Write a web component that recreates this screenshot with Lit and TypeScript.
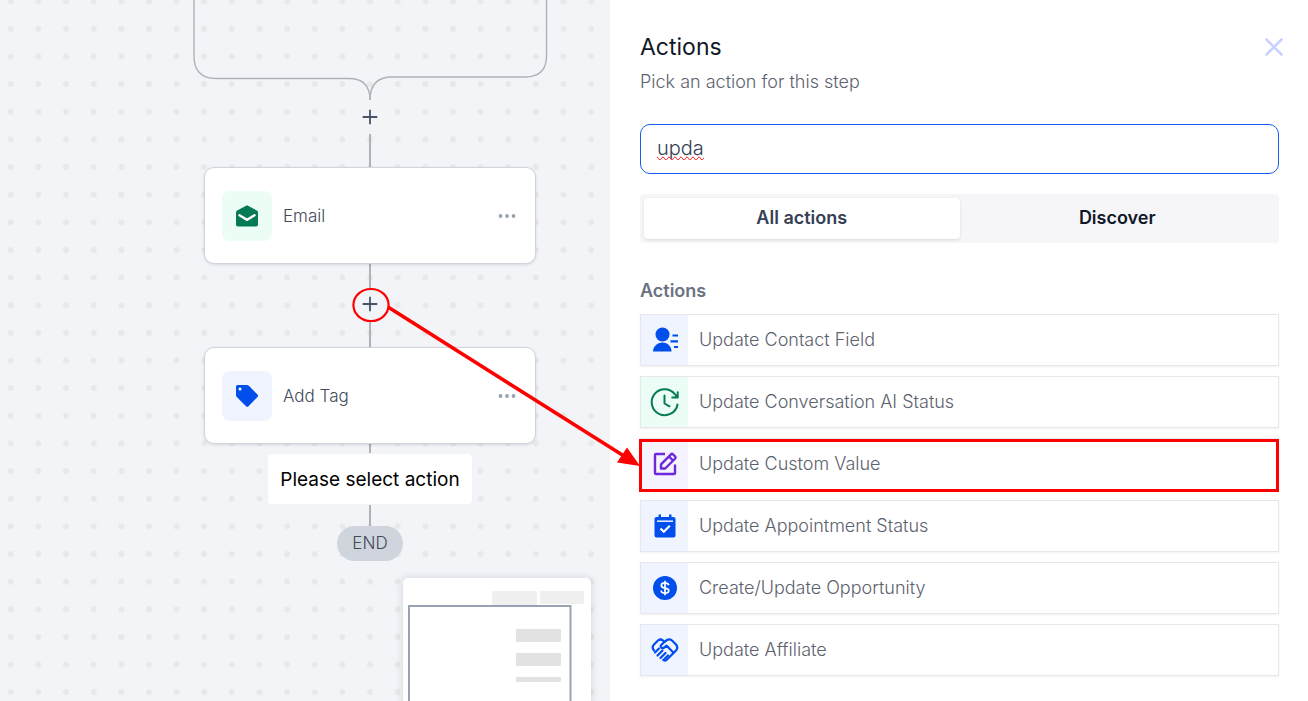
import { LitElement, html, css, svg } from "lit";
import { customElement, state } from "lit/decorators.js";
import { classMap } from "lit/directives/class-map.js";

const icons = {
  contact: svg`<svg viewBox="1 0 28 28" class="blue"><g fill="currentColor"><circle cx="12.500" cy="8.500" r="7"/><path d="M3 25.500c0-5 4.300-9 9.500-9s9 4 9 9z"/></g><path d="M22.500 9.500h5.500M20.500 15.300h7.500M24 21h4" stroke="currentColor" stroke-width="2.200" fill="none"/></svg>`,
  clock: svg`<svg viewBox="0 0 28 28" class="green"><g fill="none" stroke="currentColor" stroke-width="2" stroke-linecap="round" stroke-linejoin="round"><path d="M26.500 16.500A13 13 0 1 1 24 6.300l2.500 3M26.700 4.200v5.300h-5.500"/><path d="M13.500 7.500v8l5 2.800"/></g></svg>`,
  edit: svg`<svg viewBox="0 0 28 28" class="purple"><g fill="none" stroke="currentColor" stroke-width="2.400" stroke-linejoin="round"><path d="M14 4H5Q4 4 4 5V23Q4 24 5 24H23Q24 24 24 23V14.500"/><path d="M10 18.500v-4.200L20 4.300q1-.9 2 0l2.200 2.200q.9 1 0 2L14.200 18.500z"/><path d="M18 6.500l4 4"/></g></svg>`,
  calendar: svg`<svg viewBox="0 0 28 28" class="blue"><path fill="currentColor" d="M7.500 2.500h2.500v2.500h8v-2.500h2.500v2.500h2a2 2 0 0 1 2 2v16.500a2 2 0 0 1-2 2h-17a2 2 0 0 1-2-2V7a2 2 0 0 1 2-2h2z"/><path d="M6 9.200h16" stroke="#e0eaff" stroke-width="1.600"/><path d="M9.500 16.500l3.300 3.300 6-6" stroke="#fff" stroke-width="2.200" fill="none"/></svg>`,
  dollar: svg`<svg viewBox="0 0 28 28" class="blue"><circle cx="14" cy="14" r="12" fill="currentColor"/><path d="M17.800 11.200c-.5-1.600-1.900-2.400-3.800-2.400-2.200 0-3.700 1-3.700 2.600 0 3.700 7.500 1.600 7.500 5.200 0 1.600-1.600 2.600-3.800 2.600-2.100 0-3.600-.9-4-2.600M14 6.800v14.400" fill="none" stroke="#fff" stroke-width="1.700"/></svg>`,
  handshake: svg`<svg viewBox="0 0 28 28" class="blue"><g fill="none" stroke="currentColor" stroke-width="2.200" stroke-linecap="round" stroke-linejoin="round"><path d="M3 14.500C1 12 1.500 10 3 8.500L7 4.500q2.500-2 5 0l1.500 1.300L16 4q2.500-1.500 5 .5l4 4q2.500 3 0 6L15.500 24q-1.500 1.200-3 0"/><path d="M13.500 5.800L9.800 9.500q-.5 3 2.700 2.500l3.200-2.300 6.300 6.500"/><path d="M4 16.500l4-4M6.500 19.500l5-5M9.500 22l5-5M12.500 24l4.500-4.500"/></g></svg>`,
};

const items = [
  { label: "Update Contact Field", icon: icons.contact, tone: "tint-blue" },
  { label: "Update Conversation AI Status", icon: icons.clock, tone: "tint-green" },
  { label: "Update Custom Value", icon: icons.edit, tone: "tint-purple", marked: true },
  { label: "Update Appointment Status", icon: icons.calendar, tone: "tint-blue" },
  { label: "Create/Update Opportunity", icon: icons.dollar, tone: "tint-blue" },
  { label: "Update Affiliate", icon: icons.handshake, tone: "tint-blue" },
];

@customElement("workflow-canvas")
class WorkflowCanvas extends LitElement {
  static styles = css`
    :host { display: block; position: relative; overflow: hidden; background: #f2f4f8; }
    svg { display: block; }
    button { font: inherit; color: inherit; border: 0; background: none; padding: 0; cursor: pointer; }
    .backdrop { position: absolute; inset: 0; width: 100%; height: 100%; }
    .node {
      position: absolute; left: 204px; width: 332px; height: 97px; box-sizing: border-box;
      display: flex; align-items: center; gap: 11px; padding: 0 19px 0 17px;
      background: #fff; border: 1px solid #d0d5dd; border-radius: 10px;
      box-shadow: 0 1px 3px rgba(16, 24, 40, 0.12); color: #3f4a5a; font-size: 17px; font-weight: 300;
    }
    .email { top: 167px; }
    .tag { top: 347px; }
    .tile { display: grid; place-items: center; width: 50px; height: 50px; border-radius: 8px; }
    .tile svg { width: 24px; height: 24px; }
    .mint { background: #ecfdf5; color: #057a55; }
    .sky { background: #eff4ff; color: #004eeb; }
    .name { flex: 1; }
    .more svg { width: 18px; height: 6px; }
    .plus { position: absolute; left: 356px; width: 28px; height: 28px; display: grid; place-items: center; }
    .plus svg { width: 16px; height: 16px; }
    .first { top: 103px; }
    .second { top: 290px; }
    .hint {
      position: absolute; left: 267px; top: 453px; width: 206px; box-sizing: border-box; padding: 14px 0 12px; line-height: 24px;
      border: 1px dotted #e4e7ec; border-radius: 5px; background: #fff; color: #000; font-size: 19px; text-align: center; white-space: nowrap;
    }
    .end {
      position: absolute; left: 337px; top: 526px; width: 66px; line-height: 35px; text-align: center;
      border-radius: 18px; background: #d0d4dc; color: #3f4a5a; font-size: 17px; font-weight: 300;
    }
    .minimap {
      position: absolute; left: 403px; top: 578px; width: 188px; height: 160px;
      border-radius: 5px; background: #fff; box-shadow: 0 0 8px rgba(16, 24, 40, 0.15);
    }
  `;

  render() {
    const more = html`<button class="more" aria-label="More options"><svg viewBox="0 0 18 6" fill="#98a2b3"><circle cx="2.500" cy="3" r="1.900"/><circle cx="9" cy="3" r="1.900"/><circle cx="15.500" cy="3" r="1.900"/></svg></button>`;
    const plus = html`<svg viewBox="0 0 16 16"><path d="M8 .700v14.600M.700 8h14.600" stroke="#475467" stroke-width="1.800"/></svg>`;
    return html`
      <svg class="backdrop" aria-hidden="true">
        <defs>
          <pattern id="dots" x="-3.100" y="-12.600" width="27.640" height="27.640" patternUnits="userSpaceOnUse">
            <circle cx="13.820" cy="13.820" r="2.900" fill="#e7e8e8"/>
          </pattern>
        </defs>
        <rect width="100%" height="100%" fill="url(#dots)"/>
        <circle cx="370" cy="117" r="16" fill="#f3f4f6"/>
        <g fill="none" stroke="#b1b1b7">
          <path stroke-width="1.400" d="M194 0V56Q194 78.500 216 78.500H349Q370 78.500 370 100"/>
          <path stroke-width="1.400" d="M546.500 0V56Q546.500 77 525 77H392Q370 77 370 100"/>
          <path stroke-width="2" d="M370 134V167M370 264V288M370 322V347M370 444V454M370 505V526"/>
        </g>
      </svg>
      <button class="plus first" aria-label="Add step">${plus}</button>
      <div class="node email">
        <span class="tile mint"><svg viewBox="0 0 24 24"><path fill="currentColor" d="M12 1.200 21.800 6.500Q23 7.200 23 8.500V20.500Q23 22.500 21 22.500H3Q1 22.500 1 20.500V8.500Q1 7.200 2.200 6.500Z"/><path d="M4.500 11.200 12 15.800 19.500 11.200" fill="none" stroke="#fff" stroke-width="2.400" stroke-linecap="round"/></svg></span>
        <span class="name">Email</span>${more}
      </div>
      <button class="plus second" aria-label="Add step">${plus}</button>
      <div class="node tag">
        <span class="tile sky"><svg viewBox="0 0 24 24"><path fill="currentColor" d="M2.500 1H12Q13 1 13.800 1.800L22.500 10.500Q23.600 11.800 22.500 13L13.500 22.200Q12.300 23.200 11 22.200L1.800 13Q1 12.200 1 11V2.500Q1 1 2.500 1Z"/><circle cx="5" cy="5" r="1.500" fill="#fff"/></svg></span>
        <span class="name">Add Tag</span>${more}
      </div>
      <div class="hint">Please select action</div>
      <div class="end">END</div>
      <div class="minimap">
        <svg width="188" height="160" viewBox="0 0 188 160" aria-hidden="true">
          <g fill="#f0f0f0"><rect x="89" y="13" width="45" height="14" rx="1"/><rect x="137" y="13" width="44" height="13"/></g>
          <path d="M6 160V28H167.500V160" fill="none" stroke="#98a2b3" stroke-width="2"/>
          <g fill="#e2e2e2"><rect x="113" y="51" width="45" height="13" rx="1"/><rect x="113" y="75" width="45" height="13" rx="1"/><rect x="113" y="99" width="45" height="5" rx="1"/></g>
        </svg>
      </div>
    `;
  }
}

@customElement("action-panel")
class ActionPanel extends LitElement {
  @state() private tab = 0;

  static styles = css`
    :host { display: block; background: #fff; padding: 32px 29px 0 30px; min-width: 0; }
    * { box-sizing: border-box; }
    button { font: inherit; color: inherit; border: 0; background: none; padding: 0; margin: 0; cursor: pointer; }
    h2, h3, p, ul { margin: 0; padding: 0; }
    header { display: flex; justify-content: space-between; align-items: center; }
    h2 { font-size: 23px; line-height: 30px; font-weight: 400; color: #101828; }
    .close { display: block; width: 20px; height: 20px; margin-right: -5px; }
    .close svg { display: block; }
    .sub { margin-top: 8px; font-size: 18px; line-height: 24px; font-weight: 300; color: #5c626e; }
    .search {
      display: block; width: 100%; height: 50px; margin-top: 30px; padding: 0 16px 2px;
      border: 1px solid #155eef; border-radius: 10px; outline: none; background: #fff;
      font-family: inherit; font-size: 20px; font-weight: 300; color: #344054;
      text-decoration-line: spelling-error;
    }
    .tabs { display: grid; grid-template-columns: 1fr 1fr; margin-top: 20px; padding: 4px; height: 49px; border-radius: 4px; background: #f6f6f8; }
    .tab { border-radius: 4px; padding-bottom: 2px; font-size: 18px; font-weight: 600; color: #101828; }
    .tab.on { background: #fff; color: #344054; box-shadow: 0 1px 3px rgba(16, 24, 40, 0.12); }
    h3 { margin-top: 36px; font-size: 18px; line-height: 24px; font-weight: 600; color: #6b7280; }
    ul { list-style: none; display: grid; gap: 10px; margin-top: 11px; }
    .item {
      position: relative; display: flex; align-items: stretch; width: 100%; height: 52px; text-align: left;
      border: 1px solid #e5e7eb; background: #fff; box-shadow: 0 1px 2px rgba(16, 24, 40, 0.06);
      font-size: 18px; font-weight: 300; color: #5c626e;
    }
    .marked::after { content: ""; position: absolute; inset: 0 -1px -3px -2px; border: 3px solid #f00; }
    .pic { display: grid; place-items: center; width: 47px; }
    .pic svg { display: block; width: 28px; height: 28px; overflow: visible; }
    .label { align-self: center; padding: 0 0 2px 11px; }
    .tint-blue { background: #eff4ff; }
    .tint-green { background: #ecfdf5; }
    .tint-purple { background: #f5f3ff; }
    .blue { color: #004eeb; }
    .green { color: #057a55; }
    .purple { color: #6d28d9; }
  `;

  render() {
    return html`
      <header>
        <h2>Actions</h2>
        <button class="close" aria-label="Close"><svg viewBox="0 0 20 20"><path d="M2.500 2.500l15 15M17.500 2.500l-15 15" stroke="#c7d2fe" stroke-width="2.600" stroke-linecap="round"/></svg></button>
      </header>
      <p class="sub">Pick an action for this step</p>
      <input class="search" type="text" aria-label="Search actions" value="upda" spellcheck="false">
      <div class="tabs" role="tablist">
        ${["All actions", "Discover"].map((name, i) => html`
          <button role="tab" aria-selected=${this.tab === i} class=${classMap({ tab: true, on: this.tab === i })} @click=${() => (this.tab = i)}>${name}</button>`)}
      </div>
      <h3>Actions</h3>
      <ul>
        ${items.map((item) => html`
          <li><button class=${classMap({ item: true, marked: !!item.marked })}>
            <span class="pic ${item.tone}">${item.icon}</span><span class="label">${item.label}</span>
          </button></li>`)}
      </ul>
    `;
  }
}

@customElement("app-root")
class AppRoot extends LitElement {
  static styles = css`
    :host {
      display: grid; grid-template-columns: 610px minmax(0, 1fr); position: relative;
      height: 100vh; overflow: hidden; font-family: Inter, "Liberation Sans", sans-serif;
    }
    .callout { position: absolute; left: 0; top: 0; width: 100%; height: 100%; pointer-events: none; }
  `;

  render() {
    return html`
      <workflow-canvas></workflow-canvas>
      <action-panel></action-panel>
      <svg class="callout" aria-hidden="true">
        <ellipse cx="371" cy="305" rx="17.600" ry="16" fill="none" stroke="#f00" stroke-width="2.200"/>
        <path d="M388 307L624 456" stroke="#f00" stroke-width="3.600"/>
        <path d="M640 466L617 462.500L627 447.500Z" fill="#f00"/>
      </svg>
    `;
  }
}
